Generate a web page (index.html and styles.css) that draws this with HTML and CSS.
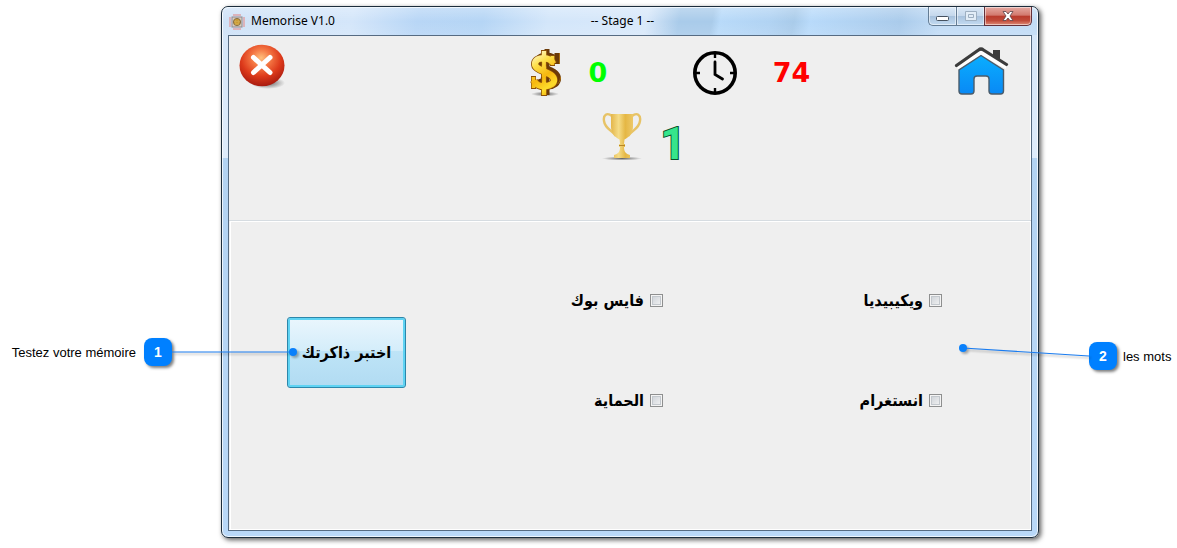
FILE: index.html
```html
<!DOCTYPE html>
<html lang="fr">
<head>
<meta charset="utf-8">
<title>Memorise V1.0</title>
<link rel="stylesheet" href="styles.css">
</head>
<body>
<main class="scene">
  <aside class="callout callout-left">
    <span class="callout-text">Testez votre mémoire</span>
    <span class="badge">1
      <svg class="leader leader-left" width="128" height="14" viewBox="0 0 128 14" aria-hidden="true">
        <path d="M0 7H121" stroke="#1a7cf0" stroke-width="1.2"/>
        <circle cx="121" cy="7" r="4" fill="#0a80fb"/>
      </svg>
    </span>
  </aside>

  <section class="window">
    <header class="titlebar">
      <div class="app-name">
        <svg width="16" height="16" viewBox="0 0 16 16" aria-hidden="true">
          <path d="M0 3h2v10H0zM14 3h2v10h-2zM4 0h8v2H4zM4 14h8v2H4z" fill="#dcb4bc"/>
          <rect x="3" y="3" width="10" height="10" fill="#d9cfc0" stroke="#8f8890"/>
          <circle cx="8" cy="8" r="3.6" fill="#c99a35" stroke="#86704c"/>
          <path d="M6 7h1v1H6zM9 7h1v1H9zM6 10h4" fill="#6b4b1c" stroke="#e7c66a" stroke-width=".6"/>
        </svg>
        <span>Memorise V1.0</span>
      </div>
      <h1 class="stage">-- Stage 1 --</h1>
      <div class="controls">
        <button class="control" aria-label="Réduire"><svg width="13" height="6" viewBox="0 0 13 6"><rect x=".5" y=".5" width="12" height="4" rx="1" fill="#fff" stroke="#465260"/></svg></button>
        <button class="control" aria-label="Agrandir"><svg width="12" height="10" viewBox="0 0 12 10"><path d="M.5.5h11v9H.5zM3.5 3.5h5v3h-5z" fill="#e2edf7" stroke="#9dafc1"/></svg></button>
        <button class="control control-close" aria-label="Fermer"><svg width="12" height="10" viewBox="0 0 12 10"><path d="M1 .5h3L6 3 8 .5h3L8 5l3 4.500H8L6 7 4 9.500H1L4 5z" fill="#fff" stroke="#5b4148" stroke-width=".8"/></svg></button>
      </div>
    </header>

    <div class="client">
      <div class="status">
        <div class="status-row">
          <button class="icon-button" aria-label="Quitter">
            <svg width="48" height="46" viewBox="0 0 48 46">
              <defs>
                <radialGradient id="red" cx=".48" cy=".32" r=".68"><stop offset="0" stop-color="#ffc07c"/><stop offset=".3" stop-color="#f57945"/><stop offset=".65" stop-color="#dd3a1b"/><stop offset="1" stop-color="#a81b10"/></radialGradient>
                <radialGradient id="shade"><stop offset="0" stop-color="#444" stop-opacity=".8"/><stop offset="1" stop-color="#444" stop-opacity="0"/></radialGradient>
              </defs>
              <ellipse cx="30" cy="39" rx="17" ry="6" fill="url(#shade)"/>
              <ellipse cx="24" cy="21.500" rx="22.500" ry="20.800" fill="url(#red)"/>
              <path d="M15.500 13.500 32 28.500M32 13.500 15.500 28.500" stroke="#fff" stroke-width="5" stroke-linecap="round"/>
            </svg>
          </button>
          <div class="stat stat-money">
            <svg width="35" height="50" viewBox="0 0 35 50" aria-hidden="true">
              <defs>
                <linearGradient id="coin" gradientUnits="userSpaceOnUse" x1="4" y1="6" x2="28" y2="44"><stop offset="0" stop-color="#fff6c8"/><stop offset=".25" stop-color="#fde04a"/><stop offset=".55" stop-color="#f6b70f"/><stop offset=".8" stop-color="#fddc2c"/><stop offset="1" stop-color="#f3b10c"/></linearGradient>
              </defs>
              <ellipse cx="16" cy="46" rx="14" ry="2.500" fill="url(#shade)"/>
              <g fill="none" stroke="#6b3a08">
                <path d="M27 14C25 7 10 6 9 14s18 7 19 16-17 10-20 2" stroke-width="8"/>
                <path d="M18 1v46" stroke-width="5"/>
                <path d="M28 5v11" stroke-width="5"/>
              </g>
              <path d="M30.500 5v11M31.500 29c0 3-1 5-3 7" stroke="#a96d12" fill="none"/>
              <g fill="none" stroke="#8a4f08">
                <path d="M24 15.500C22 9 7 8 6 15.500s18 8 19 16-17 9.500-20 1" stroke-width="8"/>
                <path d="M15 2v46" stroke-width="6"/>
                <path d="M23.500 7v11M4.500 28v13" stroke-width="5"/>
              </g>
              <g fill="none" stroke="url(#coin)">
                <path d="M24 15.500C22 9 7 8 6 15.500s18 8 19 16-17 9.500-20 1" stroke-width="6.400"/>
                <path d="M15.010 3 15 47" stroke-width="4.400"/>
                <path d="M23.510 8 23.500 17M4.510 29 4.500 40" stroke-width="3.600"/>
              </g>
              <path d="M12.500 14v3.500M17.500 14v4.500M12.500 29v5M17.500 29v5" stroke="#8a4f08" stroke-width="1.200"/>
            </svg>
            <output class="number number-money">0</output>
          </div>
          <div class="stat stat-time">
            <svg width="44" height="44" viewBox="0 0 44 44" fill="none" stroke="#000" aria-hidden="true">
              <circle cx="22" cy="22" r="20.200" stroke-width="3.600"/>
              <path d="M22 3v4M22 37v4M3 22h4M37 22h4" stroke-width="2.400"/>
              <path d="M22 11v12.500l7.500 4.500" stroke-width="2.800" stroke-linecap="round"/>
            </svg>
            <output class="number number-time">74</output>
          </div>
          <button class="icon-button icon-home" aria-label="Accueil">
            <svg width="56" height="50" viewBox="0 0 56 50">
              <defs><linearGradient id="blue" x1="0" y1="0" x2="0" y2="1"><stop offset="0" stop-color="#0aaeff"/><stop offset="1" stop-color="#0989f5"/></linearGradient></defs>
              <path d="M39 4h7v12l-7-4z" fill="#3b3b3b"/>
              <path d="M3 19 27 4 52 18v5L27 9 4 24z" fill="#fff"/>
              <path d="M2.500 19.500 24.500 4q2.500-2 5 0L52.500 18.500" stroke="#3c3c3c" stroke-width="3.200" fill="none" stroke-linecap="round"/>
              <path d="M27 9.500 49.500 24v21q0 3-3 3H38q-3 0-3-3V33q0-3-3-3H23q-3 0-3 3v12q0 3-3 3H8q-3 0-3-3V24z" fill="url(#blue)" stroke="#4b5c6b" stroke-width="1.400"/>
            </svg>
          </button>
        </div>
        <div class="level-row">
          <svg width="40" height="50" viewBox="0 0 40 50" aria-hidden="true">
            <defs><linearGradient id="gold"><stop offset="0" stop-color="#e4b64b"/><stop offset=".35" stop-color="#f5dc87"/><stop offset=".65" stop-color="#e5b744"/><stop offset="1" stop-color="#edc868"/></linearGradient></defs>
            <ellipse cx="20" cy="46.500" rx="20" ry="2" fill="url(#shade)"/>
            <path d="M10 4C5 0 1 3 2 9c1 8 8 9 12 15M30 4c5-4 9-1 8 5-1 8-8 9-12 15" fill="none" stroke="#e7c366" stroke-width="2.400"/>
            <path d="M9 2h22v13c0 6-5 11-8.500 12.500L22 32h1v3h-1c0 5 2 7 6 8v3H12v-3c4-1 6-3 6-8h-1v-3h1l-.5-4.500C14 26 9 21 9 15z" fill="url(#gold)"/>
            <path d="M17 33.500h6" stroke="#b88624"/>
          </svg>
          <output class="level">1</output>
        </div>
      </div>

      <form class="board">
        <button type="button" class="test-button" lang="ar" dir="rtl">اختبر ذاكرتك</button>
        <label class="word" lang="ar" dir="rtl"><input type="checkbox"><span>فايس بوك</span></label>
        <label class="word" lang="ar" dir="rtl"><input type="checkbox"><span>ويكيبيديا</span></label>
        <label class="word" lang="ar" dir="rtl"><input type="checkbox"><span>الحماية</span></label>
        <label class="word" lang="ar" dir="rtl"><input type="checkbox"><span>انستغرام</span></label>
      </form>
    </div>
  </section>

  <aside class="callout callout-right">
    <span class="badge">2
      <svg class="leader leader-right" width="132" height="20" viewBox="0 0 132 20" aria-hidden="true">
        <path d="M6 6 132 14" stroke="#1a7cf0" stroke-width="1.200"/>
        <circle cx="6" cy="6" r="4" fill="#0a80fb"/>
      </svg>
    </span>
    <span class="callout-text">les mots</span>
  </aside>
</main>
</body>
</html>
```
FILE: styles.css
```css
* { box-sizing: border-box; }

body {
  margin: 0;
  background: #fff;
  color: #000;
  font-family: "Liberation Sans", Arial, sans-serif;
}

button { font: inherit; cursor: pointer; }
svg { display: block; }

.scene {
  display: grid;
  grid-template-columns: 221px 1fr 138px;
  padding: 6px 0 9px;
}

/* Callouts beside the window */
.callout {
  display: flex;
  align-items: center;
  height: 28px;
  font-size: 14px;
  white-space: nowrap;
}
.callout-left { gap: 8px; margin-top: 332px; padding-right: 49px; justify-content: flex-end; }
.callout-right { gap: 6px; margin-top: 336px; padding-left: 50px; }
.callout-text { font-size: 13px; }

.badge {
  position: relative;
  z-index: 1;
  width: 28px;
  height: 28px;
  border-radius: 8px;
  background: #0080ff;
  box-shadow: 2px 2px 3px rgba(0, 0, 0, 0.5);
  color: #fff;
  font-weight: bold;
  line-height: 28px;
  text-align: center;
}
.leader { position: absolute; filter: drop-shadow(2px 2px 1px rgba(0, 0, 0, 0.3)); }
.leader-left { left: 28px; top: 7px; }
.leader-right { right: 28px; top: 0; }

/* Window frame */
.window {
  padding: 0 6px 6px;
  border: 1px solid #1c2d3c;
  border-radius: 7px;
  background: linear-gradient(#d3e5f8 0, #dfecfb 151px, #b3d3f2 151px, #b9d8f8 100%);
  box-shadow: inset 0 0 0 1px rgba(255, 255, 255, 0.75), 2px 2px 5px rgba(0, 0, 0, 0.65);
}

.titlebar {
  display: grid;
  grid-template-columns: 1fr auto 1fr;
  height: 28px;
  margin: 0 -5px;
  padding: 0 5px;
  border-top: 1px solid #eef6fd;
  border-radius: 6px 6px 0 0;
  background:
    linear-gradient(rgba(255, 255, 255, 0.25), rgba(255, 255, 255, 0) 50%, rgba(255, 255, 255, 0.1)),
    linear-gradient(100deg, #cfe2f7 0, #d4e6fa 16%, #b8d6f6 24%, #b5d5f5 32%, #d3e6fa 40%, #d8e8fa 52%, #a9cbea 56%, #a9cbea 60%, #b8daf9 61%, #b1d3f3 67%, #a9cbea 70%, #b8dafa 72%, #aacbeb 83%, #c2dcf6 88%);
  font-family: "Noto Sans", sans-serif;
  font-size: 12px;
}
.app-name { display: flex; align-items: center; gap: 6px; padding-left: 1px; line-height: 24px; }
.app-name span { padding-bottom: 2px; }
.stage { margin: 0 15px 0 0; font-size: 12px; font-weight: normal; line-height: 25px; }
.controls { display: flex; align-items: flex-start; justify-content: flex-end; margin-top: -1px; }
.control {
  display: flex;
  align-items: center;
  justify-content: center;
  width: 28px;
  height: 19px;
  padding: 0;
  border: 1px solid #647c94;
  border-top: 0;
  border-right-width: 0;
  background: linear-gradient(#dbe9f7 0, #c5d8ec 48%, #a7c1dc 50%, #c3dbf2 100%);
  box-shadow: inset 0 0 0 1px rgba(255, 255, 255, 0.5);
}
.control:first-child { padding-top: 6px; border-radius: 0 0 0 5px; }
.control-close {
  width: 48px;
  border-right-width: 1px;
  border-color: #63303a;
  border-radius: 0 0 5px 0;
  background: linear-gradient(#e6aaa2 0, #d2786d 46%, #b93a2c 50%, #c04a39 75%, #df8c78 100%);
}

.client {
  border: 1px solid #566b82;
  background: #efefef;
  box-shadow: inset -1px -1px 0 #fff;
}

/* Score and time */
.status { height: 185px; padding: 8px 21px 0 9px; border-bottom: 1px solid #d6dce1; }
.status-row {
  display: grid;
  grid-template-columns: 291fr 163fr 261fr 56px;
  align-items: start;
}
.icon-button { width: max-content; padding: 0; border: 0; background: none; }
.icon-home { margin-top: 2px; }
.stat { display: flex; align-items: center; }
.stat-money { gap: 24px; margin-top: 4px; }
.stat-time { gap: 36px; margin-top: 7px; }
.number { font: bold 27px/44px "DejaVu Sans", sans-serif; }
.number-money { color: #0f0; }
.number-time { color: #f00; }

.level-row {
  display: flex;
  align-items: flex-start;
  justify-content: center;
  gap: 18px;
  margin-top: 14px;
  padding-left: 40px;
}
.level {
  margin-top: 10px;
  color: #35e58c;
  font-family: Roboto, sans-serif;
  font-size: 44px;
  font-weight: bold;
  line-height: 44px;
  -webkit-text-stroke: 2px #07502d;
  paint-order: stroke fill;
}

/* Words to remember */
.board {
  display: grid;
  grid-template-columns: 119px 257fr 279fr;
  grid-auto-rows: 100px;
  align-items: center;
  margin: 0 1px 1px;
  padding: 28px 88px 79px 56px;
  border-top: 1px solid #fff;
  border-left: 1px solid #fff;
  font-family: "DejaVu Sans Condensed", "DejaVu Sans", sans-serif;
  font-size: 16px;
  font-weight: bold;
}
.test-button {
  grid-row: span 2;
  height: 71px;
  margin-top: 4px;
  padding: 0;
  border: 1px solid #2c87ab;
  border-radius: 3px;
  background: linear-gradient(#eaf6fd 0, #d4edfa 47%, #bee4f7 48%, #b1dbf2 100%);
  box-shadow: inset 0 0 0 2px #5fd3f3;
  color: #000;
  white-space: nowrap;
}
.word { display: flex; align-items: center; justify-self: end; gap: 6px; }
.word input {
  appearance: none;
  width: 13px;
  height: 13px;
  margin: 0;
  border: 1px solid #8e8f8f;
  background: linear-gradient(135deg, #c9ced4, #f6f6f6);
  box-shadow: inset 0 0 0 1px #f4f4f4, inset 0 0 0 2px #c3c8cd;
}
.word input:checked { background: #2f6fb5; }
```
